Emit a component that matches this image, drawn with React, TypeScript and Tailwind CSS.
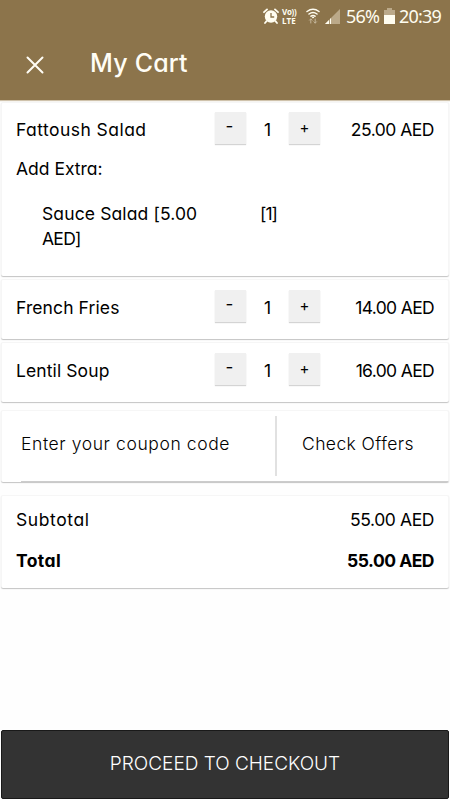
import type { ReactNode } from "react";

const card =
  "mx-px w-[448px] rounded-[2px] border-x border-t border-[#f6f6f6] bg-white shadow-[0_1px_1px_#c4c4c4]";

function StatusBar() {
  return (
    <div className="flex h-8 items-center pl-[263px] text-[#fffdf0]">
      <svg className="h-4 w-4" viewBox="0 0 16 16" fill="none">
        <circle cx="8" cy="8.5" r="6.2" fill="currentColor" />
        <path d="M1 4.2 4 1.4M15 4.2 12 1.4M3.5 13.2 2 15M12.5 13.2 14 15" stroke="currentColor" strokeWidth="1.8" strokeLinecap="round" />
        <path d="M8 5v4h3.2" stroke="#8c744b" strokeWidth="1.3" />
      </svg>
      <div className="ml-[3px] flex w-[17px] flex-col font-['Open_Sans',sans-serif] text-[8px] leading-[9px] font-bold">
        <span className="tracking-[-0.3px]">Vo))</span>
        <span className="tracking-[0.1px]">LTE</span>
      </div>
      <svg className="ml-[7px] h-4 w-[14px]" viewBox="0 0 14 16" fill="none" stroke="currentColor" strokeLinecap="round">
        <path d="M1 3.5Q7-1 13 3.5M3 6q4-3 8 0M5 8.2q2-1.5 4 0" strokeWidth="1.5" />
        <circle cx="7" cy="9.5" r=".6" fill="currentColor" />
        <path d="M4.8 15v-4m-1.3 1.2 1.3-1.3 1.3 1.3M9.2 11v4m-1.3-1.2 1.3 1.3 1.3-1.3" stroke="#c5b79c" strokeWidth="1" />
      </svg>
      <svg className="ml-[5px] h-4 w-4" viewBox="0 0 16 16">
        <path d="M0 16 15 1v15z" fill="#bba989" />
        <path d="M0 16 6 10v6z" fill="currentColor" />
        <path d="M4.5 9.5V16" stroke="#8c744b" strokeWidth=".7" />
      </svg>
      <span className="ml-[5px] w-[34px] font-['Noto_Sans',sans-serif] text-[18px] leading-none tracking-[-0.8px]">56%</span>
      <svg className="ml-[4px] h-4 w-[11px]" viewBox="0 0 11 16">
        <path d="M0 2h3V0h5v2h3v5H0z" fill="#bba989" />
        <path d="M0 7h11v9H0z" fill="currentColor" />
      </svg>
      <span className="ml-[4px] font-['Noto_Sans',sans-serif] text-[18px] leading-none tracking-[-0.8px]">20:39</span>
    </div>
  );
}

function Quantity() {
  return (
    <>
      <button className="flex h-8 w-[31px] justify-center bg-[#f0f0f0] pt-[2px] pr-[2px] text-[17px] leading-[24px] shadow-[0_1px_1px_#d4d4d4]">-</button>
      <span className="w-[43px] text-center leading-[35px]">1</span>
      <button className="flex h-8 w-[31px] items-center justify-center bg-[#f0f0f0] text-[15px] shadow-[0_1px_1px_#d4d4d4]">+</button>
    </>
  );
}

function ItemRow({ name, price }: { name: ReactNode; price: ReactNode }) {
  return (
    <div className="flex h-[34px] pr-[14px] pl-[14px]">
      <div className="w-[199px] leading-[36px]">{name}</div>
      <Quantity />
      <div className="flex-1 text-right leading-[36px]">{price}</div>
    </div>
  );
}

export default function App() {
  return (
    <main className="flex h-[800px] w-[450px] flex-col overflow-hidden bg-[#fefefe] font-['Inter','Open_Sans',sans-serif] text-[17.5px] text-black [font-feature-settings:'cv11','calt'_0]">
      <header className="h-[100px] shrink-0 bg-[#8c744b] shadow-[0_1px_1px_#cfc2ab]">
        <StatusBar />
        <div className="flex h-[62px] items-center pl-[26px] text-[#fffdf5]">
          <svg className="mt-1 h-[18px] w-[18px]" viewBox="0 0 18 18" fill="none" stroke="currentColor" strokeWidth="2" strokeLinecap="round">
            <path d="m1.5 1.5 15 15m0-15-15 15" />
          </svg>
          <h1 className="ml-[46px] text-[25px] leading-none font-medium tracking-[0.2px]">My Cart</h1>
        </div>
      </header>

      <section className={`${card} mt-[2px] h-[174px] shrink-0 pt-[9px]`}>
        <ItemRow name={<span className="tracking-[0.45px]">Fattoush Salad</span>} price={<span className="tracking-[-0.5px]">25.00 AED</span>} />
        <p className="mt-[11px] pl-[14px] leading-[24px]">Add Extra:</p>
        <div className="mt-[20px] flex pl-[40px] leading-[25px]">
          <p className="w-[218px]"><span className="tracking-[0.12px]">Sauce Salad [5.00</span><br /><span className="tracking-[-0.7px]">AED]</span></p>
          <p className="tracking-[-1px]">[1]</p>
        </div>
      </section>
      <section className={`${card} mt-[3px] h-[60px] shrink-0 pt-[10px]`}>
        <ItemRow name={<span className="tracking-[0.1px]">French Fries</span>} price={<span className="tracking-[-0.65px]">14.00 AED</span>} />
      </section>
      <section className={`${card} mt-[3px] h-[60px] shrink-0 pt-[10px]`}>
        <ItemRow name={<span className="tracking-[0.1px]">Lentil Soup</span>} price={<span className="tracking-[-0.65px]">16.00 AED</span>} />
      </section>

      <section className={`${card} mt-[8px] h-[72px] shrink-0 pl-[19px] font-light`}>
        <div className="flex h-[71px] border-b border-[#cccccc]">
          <div className="w-[254px] pt-[21px] leading-[24px]"><span className="tracking-[0.6px]">Enter your coupon code</span></div>
          <div className="mt-[5px] h-[60px] w-[2px] bg-[#e1e1e1]" />
          <div className="pt-[21px] pl-[25px] leading-[24px] font-[350]"><span className="tracking-[0.4px]">Check Offers</span></div>
        </div>
      </section>

      <section className={`${card} mt-[13px] h-[93px] shrink-0 px-[14px] pt-[12px]`}>
        <div className="flex justify-between leading-[24px]"><span className="tracking-[0.6px]">Subtotal</span><span className="tracking-[-0.4px]">55.00 AED</span></div>
        <div className="mt-[17px] flex justify-between leading-[24px] font-bold"><span className="tracking-[0.4px]">Total</span><span className="tracking-[-0.5px]">55.00 AED</span></div>
      </section>

      <button className="mx-px mt-auto mb-px flex h-[69px] shrink-0 items-center justify-center rounded-[2px] border border-[#191919] bg-[#333333] pb-px text-[19px] font-light text-white">
        PROCEED TO CHECKOUT
      </button>
    </main>
  );
}
